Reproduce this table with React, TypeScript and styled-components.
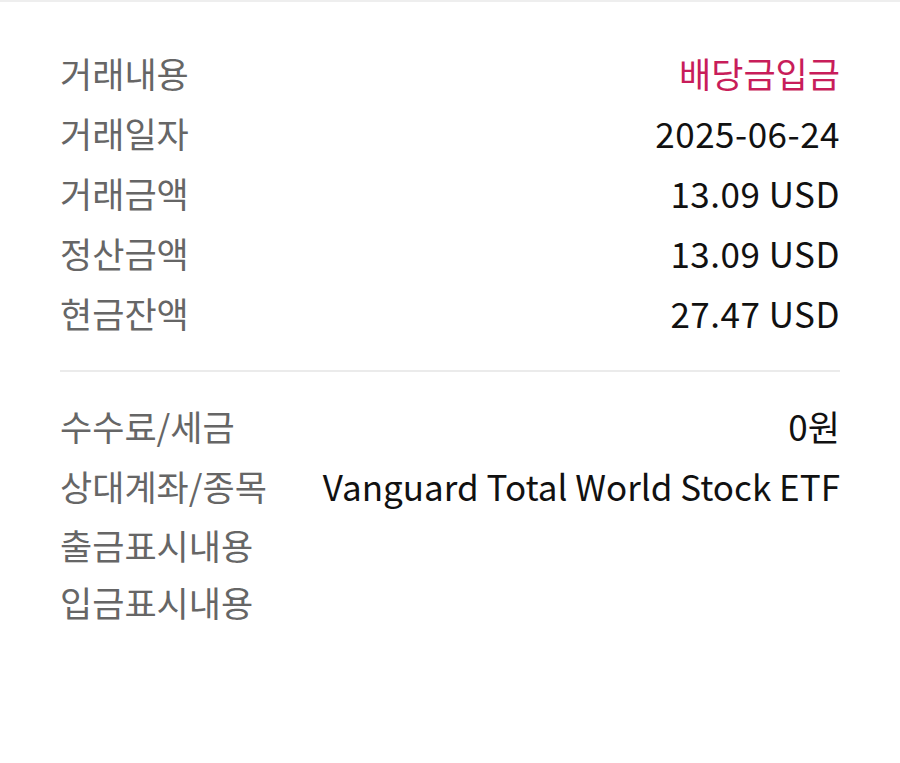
import React from "react";
import styled, { createGlobalStyle } from "styled-components";

const Global = createGlobalStyle`
  html, body { margin: 0; padding: 0; background: #fff; }
  body { font-family: "Noto Sans CJK KR", "Noto Sans", sans-serif; }
`;

const Page = styled.div`
  width: 900px;
  min-height: 763px;
  box-sizing: border-box;
  border-top: 2px solid #eeeeee;
  padding: 40px 60px 0 60px;
  background: #fff;
`;

const Section = styled.div`
  display: flex;
  flex-direction: column;
`;

const Row = styled.div<{ $h?: number }>`
  display: flex;
  justify-content: space-between;
  align-items: center;
  height: ${(p) => p.$h ?? 60}px;
  font-size: 35px;
  line-height: 1;
`;

const Label = styled.span`
  color: #666666;
  white-space: nowrap;
`;

const Value = styled.span<{ $accent?: boolean; $num?: boolean }>`
  color: ${(p) => (p.$accent ? "#c81d5a" : "#111111")};
  white-space: nowrap;
  text-align: right;
  letter-spacing: ${(p) => (p.$num ? "0.5px" : "0")};
`;

const Divider = styled.div`
  height: 2px;
  background: #ebebeb;
  margin: 28px 0 23px;
`;

const top = [
  { l: "거래내용", v: "배당금입금", accent: true },
  { l: "거래일자", v: "2025-06-24", num: true },
  { l: "거래금액", v: "13.09 USD", num: true },
  { l: "정산금액", v: "13.09 USD", num: true },
  { l: "현금잔액", v: "27.47 USD", num: true },
];

const bottom = [
  { l: "수수료/세금", v: "0원", h: 60 },
  { l: "상대계좌/종목", v: "Vanguard Total World Stock ETF", h: 60 },
  { l: "출금표시내용", v: "", h: 58 },
  { l: "입금표시내용", v: "", h: 56 },
];

export default function App() {
  return (
    <>
      <Global />
      <Page>
        <Section>
          {top.map((r) => (
            <Row key={r.l}>
              <Label>{r.l}</Label>
              <Value $accent={r.accent} $num={r.num}>
                {r.v}
              </Value>
            </Row>
          ))}
        </Section>
        <Divider />
        <Section>
          {bottom.map((r) => (
            <Row key={r.l} $h={r.h}>
              <Label>{r.l}</Label>
              <Value>{r.v}</Value>
            </Row>
          ))}
        </Section>
      </Page>
    </>
  );
}
